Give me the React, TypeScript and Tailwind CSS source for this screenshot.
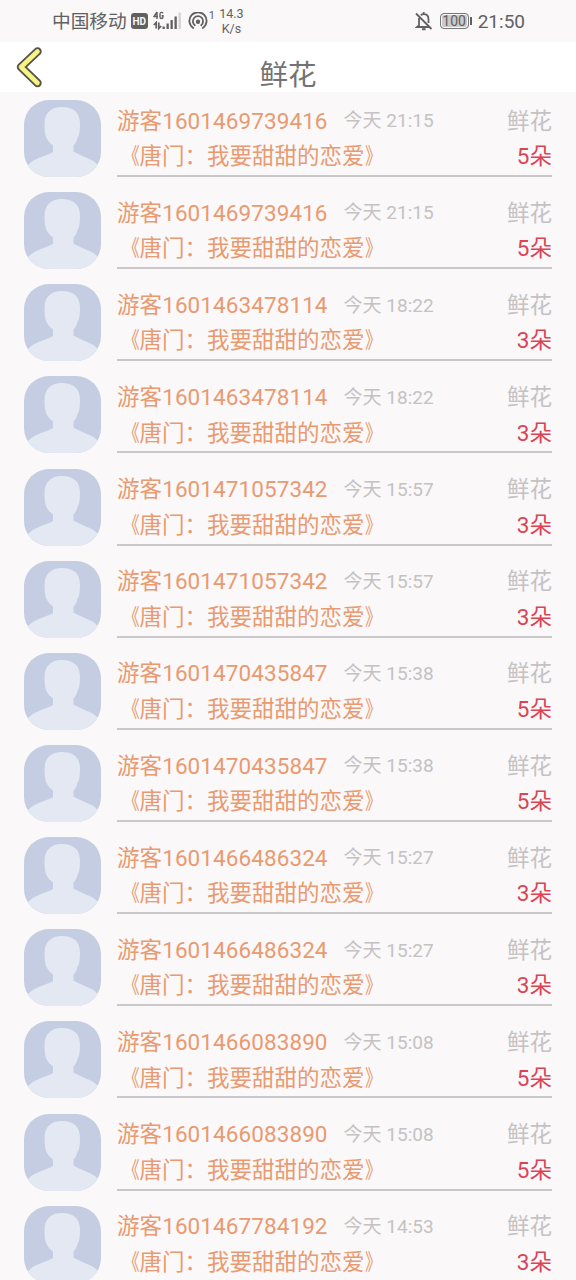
import React from 'react';

interface GiftRecord {
  user: string;
  time: string;
  count: number;
}

const records: GiftRecord[] = [
  { user: '游客1601469739416', time: '21:15', count: 5 },
  { user: '游客1601469739416', time: '21:15', count: 5 },
  { user: '游客1601463478114', time: '18:22', count: 3 },
  { user: '游客1601463478114', time: '18:22', count: 3 },
  { user: '游客1601471057342', time: '15:57', count: 3 },
  { user: '游客1601471057342', time: '15:57', count: 3 },
  { user: '游客1601470435847', time: '15:38', count: 5 },
  { user: '游客1601470435847', time: '15:38', count: 5 },
  { user: '游客1601466486324', time: '15:27', count: 3 },
  { user: '游客1601466486324', time: '15:27', count: 3 },
  { user: '游客1601466083890', time: '15:08', count: 5 },
  { user: '游客1601466083890', time: '15:08', count: 5 },
  { user: '游客1601467784192', time: '14:53', count: 3 },
];

const SignalIcon: React.FC = () => (
  <svg width="29" height="20" viewBox="0 0 29 20" className="ml-[5px] shrink-0" fill="none">
    <path d="M4 1 1 5.5H5M4 1V8M10 2.2C9.4 1 7 1 7 3v3c0 2 3 2 3 0V4.8H8.6" stroke="#616161" strokeWidth="1.4" />
    <path d="M3.2 17.500V11.500L.8 14M5.800 11.500v6l2.400-2.500" stroke="#616161" strokeWidth="1.7" />
    <path d="M9.500 15.500h2.300V18H9.500zM13.500 12.500h2.300V18h-2.300zM17.500 9h2.300v9h-2.300zM21.500 5.500h2.300V18h-2.300z" fill="#616161" />
    <path d="M25.500 1.500h2.300V18h-2.300z" fill="#d2d0d1" />
  </svg>
);

const HotspotIcon: React.FC = () => (
  <svg width="20" height="18" viewBox="0 0 20 18" className="ml-[6px] shrink-0" fill="none" stroke="#616161" strokeWidth="1.8" strokeLinecap="round">
    <path d="M5.2 16A8.6 8.6 0 1 1 14.8 16" />
    <path d="M6.8 13.2A5.1 5.1 0 1 1 13.2 13.2" />
    <circle cx="10" cy="9.8" r="1.3" fill="#616161" />
  </svg>
);

const BellOffIcon: React.FC = () => (
  <svg width="18" height="20" viewBox="0 0 18 20" className="shrink-0" fill="none" stroke="#616161" strokeWidth="1.8">
    <path d="M5.8 4.2C6.600 3.500 7.500 3.200 8.700 3.200c3.100 0 4.800 2.200 4.800 5V12M4 7v7.500L2 16h12M8.700 3V1" />
    <path d="m1 2.5 15.5 15.5" />
    <path d="M7 18.2h3.6" strokeWidth="2" />
  </svg>
);

const BackIcon: React.FC = () => (
  <svg width="28" height="42" viewBox="0 0 28 42" fill="none" strokeLinecap="round" strokeLinejoin="round">
    <path d="M21.500 5.500 5 21 21.500 37" stroke="#55534a" strokeWidth="8.400" />
    <path d="M21.500 5.500 5 21 21.500 37" stroke="#f9f383" strokeWidth="4.6" />
  </svg>
);

const Avatar: React.FC = () => (
  <svg width="77" height="77" viewBox="0 0 77 77" className="shrink-0 rounded-[25px]">
    <rect width="77" height="77" fill="#c4cde1" />
    <path
      d="M38 7C27 7 20.500 13 20.500 24c0 7 .5 11 2.500 15 1.500 3 4 5 6 6.500V52C22 56 11 57.500 4 65L0 77h77l-4-13C68 58.500 56 56 49.500 51.500V45.500c2-1.500 3.200-4.500 4-7.500 2-3 2.500-8 2.500-14C56 12 49 7 38 7Z"
      fill="#e3e8f2"
    />
  </svg>
);

const StatusBar: React.FC = () => (
  <div className="flex h-[42px] shrink-0 items-center bg-[#faf8f9] pr-[51px] pl-[52px] text-[#616161]">
    <span className="pt-[3px] text-[18.7px] leading-none">中国移动</span>
    <span className="ml-[4px] flex h-4 w-[17px] items-center justify-center rounded-[3px] bg-[#616161] text-[10px] font-bold text-[#faf8f9]">HD</span>
    <SignalIcon />
    <HotspotIcon />
    <span className="mb-[11px] ml-px text-[11px] leading-none">1</span>
    <span className="ml-[4px] flex w-[25px] flex-col items-center text-[12.5px] leading-[15px]">
      <span>14.3</span>
      <span>K/s</span>
    </span>
    <div className="ml-auto flex items-center">
      <BellOffIcon />
      <span className="ml-[7px] flex h-4 w-[29px] items-center justify-center rounded-[4px] border border-[#777] bg-[#cbc9ca] text-[14px] leading-none ring-1 ring-[#faf8f9] ring-inset">100</span>
      <span className="ml-px h-2 w-[2px] bg-[#616161]" />
      <span className="ml-[6px] pt-px text-[19px] leading-none">21:50</span>
    </div>
  </div>
);

const RecordRow: React.FC<{ record: GiftRecord }> = ({ record }) => (
  <div className="flex h-[92.15px] items-start px-6">
    <Avatar />
    <div className="ml-4 flex h-[77px] flex-1 flex-col border-b-2 border-[#cac8ca] pt-[4px] text-[22.5px] whitespace-nowrap">
      <div className="flex h-[35px] items-center">
        <span className="tracking-[0.08px] text-[#e99a70]">{record.user}</span>
        <span className="ml-4 text-[19px] text-[#c4c2c3]">今天 {record.time}</span>
        <span className="ml-auto text-[#c4c2c3]">鲜花</span>
      </div>
      <div className="flex h-9 items-center justify-between">
        <span className="text-[#e99a70]">
          <span className="inline-block origin-right scale-x-75">《</span>
          唐门：我要甜甜的恋爱
          <span className="inline-block origin-left scale-x-75">》</span>
        </span>
        <span className="text-[#dc4354]">{record.count}朵</span>
      </div>
    </div>
  </div>
);

export default function App() {
  return (
    <div className="flex h-[1280px] w-[576px] flex-col overflow-hidden bg-[#faf8f9] font-[Roboto,'Noto_Sans_CJK_SC',sans-serif]">
      <StatusBar />
      <header className="grid h-[50px] shrink-0 grid-cols-[1fr_auto_1fr] items-center bg-white">
        <button className="pl-4" aria-label="返回">
          <BackIcon />
        </button>
        <h1 className="translate-y-[2px] pt-[14px] text-[28.5px] leading-9 text-[#737373]">鲜花</h1>
      </header>
      <main className="shrink-0 pt-2">
        {records.map((record, index) => (
          <RecordRow key={index} record={record} />
        ))}
      </main>
    </div>
  );
}
